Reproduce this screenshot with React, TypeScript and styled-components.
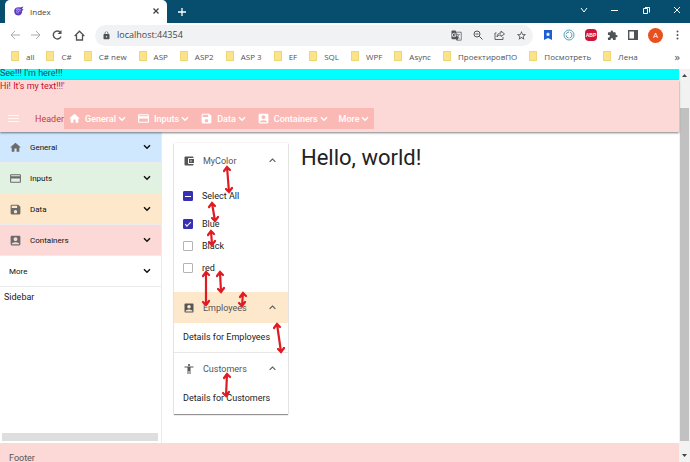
import React, { useEffect, useRef, useState } from "react";
import styled, { createGlobalStyle } from "styled-components";
import {
  MdAccessibility,
  MdAccountBalanceWallet,
  MdAccountBox,
  MdCreditCard,
  MdExtension,
  MdExpandLess,
  MdHome,
  MdLock,
  MdSave,
  MdStarBorder,
  MdGTranslate,
} from "react-icons/md";

const GlobalStyle = createGlobalStyle`
  *, *::before, *::after { box-sizing: border-box; }
  body { margin: 0; background: #fff; font-family: Roboto, "Liberation Sans", sans-serif; font-size: 9px; color: #222; }
  button { font: inherit; color: inherit; border: 0; background: none; padding: 0; }
  a { color: inherit; text-decoration: none; }
  svg { display: block; flex: none; }
`;

const Window = styled.div`
  display: flex;
  flex-direction: column;
  height: 100vh;
  overflow: hidden;
`;

/* Browser frame */

const TabStrip = styled.div`
  display: flex;
  align-items: center;
  height: 23px;
  padding: 0 7px 0 5px;
  background: #064d6e;
  color: #fff;
  font-family: "Open Sans", sans-serif;
`;

const Tab = styled.div`
  display: flex;
  align-items: center;
  gap: 6px;
  width: 162px;
  height: 23px;
  padding: 0 6px 1px 9px;
  border-radius: 5px 5px 0 0;
  background: #fff;
  color: #444;
  font-size: 8px;
`;

const TabTitle = styled.span`
  flex: 1;
`;

const TabButton = styled.button`
  display: flex;
  margin-left: 10px;
`;

const WindowControls = styled.div`
  display: flex;
  align-items: center;
  gap: 23px;
  margin-left: auto;
  padding-bottom: 3px;
  padding-right: 2px;
`;

const Toolbar = styled.div`
  display: flex;
  align-items: center;
  height: 24px;
  padding: 0 10px;
  background: #fff;
  color: #505356;
`;

const NavButtons = styled.div`
  display: flex;
  align-items: center;
  gap: 11px;
  width: 85px;
`;

const AddressBar = styled.div`
  display: flex;
  flex: 1;
  align-items: center;
  gap: 5px;
  height: 21px;
  padding: 0 6px 0 7px;
  border-radius: 11px;
  background: #f1f2f4;
`;

const AddressInput = styled.input`
  flex: 1;
  min-width: 0;
  padding: 0 0 1px 1px;
  border: 0;
  outline: 0;
  background: transparent;
  color: #45484b;
  font: 9px "Open Sans", sans-serif;
`;

const AddressActions = styled.div`
  display: flex;
  align-items: center;
  gap: 11px;
`;

const Extensions = styled.div`
  display: flex;
  align-items: center;
  gap: 10px;
  margin-left: 10px;
  margin-right: -2px;
`;

const BlockerBadge = styled.button`
  && {
    width: 12px;
    height: 12px;
    border-radius: 4px;
    background: #d1143f;
    color: #fff;
    font: bold 5px "Liberation Sans", sans-serif;
  }
`;

const Avatar = styled.button`
  && {
    width: 15px;
    height: 15px;
    border-radius: 50%;
    background: #e8501f;
    color: #fff;
    font-size: 8px;
  }
`;

const Bookmarks = styled.nav`
  display: flex;
  align-items: center;
  height: 22px;
  padding: 0 10px 4px 11px;
  background: #fff;
  color: #505356;
  font: 8px "Open Sans", sans-serif;
  white-space: nowrap;
`;

const Bookmark = styled.a`
  display: flex;
  align-items: center;
  gap: 7px;
  margin-right: 12px;
  &::before {
    content: "";
    width: 8px;
    height: 10px;
    border: 1px solid #efd676;
    background: #fbe389;
  }
`;

const MoreBookmarks = styled.button`
  && {
    margin-left: auto;
    font-size: 11px;
  }
`;

/* Page */

const Viewport = styled.div`
  display: flex;
  flex: 1;
  min-height: 0;
`;

const Page = styled.div`
  display: flex;
  flex: 1;
  flex-direction: column;
  min-width: 0;
  min-height: 0;
`;

const Notice = styled.div`
  height: 11px;
  background: #00ffff;
  color: #1c4a55;
  line-height: 9px;
`;

const Header = styled.header`
  position: relative;
  background: #fcd9d6;
  box-shadow: 0 1px 2px rgba(0, 0, 0, 0.5);
`;

const Warning = styled.div`
  height: 28px;
  color: #c8102e;
  line-height: 12px;
`;

const HeaderBar = styled.div`
  display: flex;
  align-items: center;
  height: 24px;
  padding: 0 0 3px 8px;
`;

const MenuToggle = styled.button`
  width: 27px;
  color: #fff;
`;

const HeaderTitle = styled.span`
  width: 29px;
  color: #c73a3a;
`;

const Menu = styled.nav`
  display: flex;
  align-items: center;
  gap: 11px;
  height: 21px;
  padding: 0 5px 0 4px;
  background: #fbb9b6;
  color: #fff;
  font-weight: 500;
`;

const MenuItem = styled.button`
  display: flex;
  align-items: center;
  gap: 2px;
`;

const MenuText = styled.span<{ $icon: boolean }>`
  padding-left: ${(p) => (p.$icon ? "2px" : "0")};
`;

const Body = styled.div`
  display: flex;
  flex: 1;
  min-height: 0;
`;

const Sidebar = styled.aside`
  display: flex;
  flex-direction: column;
  width: 162px;
  border-right: 1px solid #ebebeb;
`;

const SideItem = styled.button<{ $tint: string }>`
  && {
    display: flex;
    align-items: center;
    height: 31px;
    padding: 0 10px 0 9px;
    border-bottom: 1px solid #ececec;
    background: ${(p) => p.$tint};
    color: #111;
    font-size: 8px;
    font-weight: 400;
    text-align: left;
  }
`;

const SideIcon = styled.span`
  width: 21px;
  color: #6b6b6b;
`;

const SideText = styled.span`
  flex: 1;
`;

const SideLabel = styled.div`
  padding: 5px 4px;
`;

const SideScroll = styled.div`
  height: 8px;
  margin: auto 3px 2px 2px;
  background: #dedede;
`;

const Content = styled.main`
  display: flex;
  flex: 1;
  align-items: flex-start;
  gap: 13px;
  padding: 11px 12px;
`;

const Card = styled.section`
  position: relative;
  width: 114px;
  padding-top: 2px;
  background: #fff;
  box-shadow: 0 1px 1px rgba(0, 0, 0, 0.4), 0 0 2px rgba(0, 0, 0, 0.12);
`;

const PanelHead = styled.button<{ $tint?: string }>`
  && {
    display: flex;
    align-items: center;
    width: 100%;
    height: 31px;
    padding: 0 9px;
    background: ${(p) => p.$tint ?? "#fff"};
    color: #555;
    text-align: left;
  }
`;

const PanelTitle = styled.span`
  flex: 1;
  padding-left: 8px;
`;

const PanelText = styled.div<{ $divider?: boolean }>`
  height: 30px;
  padding: 0 9px;
  border-bottom: ${(p) => (p.$divider ? "1px solid #e8e8e8" : "0")};
  line-height: 29px;
`;

const Choices = styled.div`
  padding: 9px 9px 13px;
`;

const Choice = styled.label<{ $lead?: boolean }>`
  display: flex;
  align-items: center;
  gap: 9px;
  height: 22px;
  margin-bottom: ${(p) => (p.$lead ? "6px" : "0")};
`;

const Tick = styled.input`
  appearance: none;
  display: grid;
  place-items: center;
  width: 10px;
  height: 10px;
  margin: 0;
  border: 1px solid #b4b4b4;
  border-radius: 1px;
  background: #fff;
  &:checked,
  &:indeterminate {
    border-color: #3730b4;
    background: #3730b4;
  }
  &:indeterminate::before {
    content: "";
    width: 6px;
    height: 1px;
    background: #fff;
  }
  &:checked::before {
    content: "";
    width: 6px;
    height: 3px;
    margin-bottom: 2px;
    border: solid #fff;
    border-width: 0 0 1px 1px;
    transform: rotate(-45deg);
  }
`;

const Marks = styled.svg`
  position: absolute;
  top: 0;
  left: 0;
  pointer-events: none;
`;

const Title = styled.h1`
  margin: 1px 0 0;
  font-size: 22px;
  font-weight: 400;
  line-height: 28px;
`;

const Footer = styled.footer`
  height: 19px;
  padding: 10px 9px 0;
  overflow: hidden;
  background: #fcd9d6;
  color: #555;
  line-height: 11px;
`;

const ScrollTrack = styled.div`
  display: flex;
  flex-direction: column;
  align-items: center;
  width: 11px;
  padding: 5px 1px;
  background: #f2f2f2;
`;

const ScrollThumb = styled.div`
  flex: 1;
  width: 9px;
  margin: 31px 0 13px;
  background: #c1c1c1;
`;

const bookmarks = ["all", "C#", "C# new", "ASP", "ASP2", "ASP 3", "EF", "SQL", "WPF", "Async", "ПроектировПО", "Посмотреть", "Лена"];

const sections = [
  { name: "General", tint: "#d0e8fd", Icon: MdHome },
  { name: "Inputs", tint: "#e1f2e3", Icon: MdCreditCard },
  { name: "Data", tint: "#fee8cb", Icon: MdSave },
  { name: "Containers", tint: "#fcd9d6", Icon: MdAccountBox },
  { name: "More", tint: "#fff", Icon: null },
];

/* Each arrow runs between two points of the card, with a head at both ends. */
const arrows = [
  [53, 24, 55, 49],
  [38, 60, 41, 78],
  [37, 88, 38, 102],
  [32, 129, 32, 162],
  [46, 129, 47, 149],
  [69, 150, 68, 163],
  [103, 181, 107, 209],
  [53, 231, 52, 253],
];

const arrowPath = ([x1, y1, x2, y2]: number[]) =>
  `M${x1} ${y1}L${x2} ${y2}M${x1 - 3} ${y1 + 4}L${x1} ${y1}L${x1 + 3} ${y1 + 3}M${x2 - 3} ${y2 - 3}L${x2} ${y2}L${x2 + 3} ${y2 - 4}`;

function Chevron() {
  return (
    <svg width="8" height="6" fill="none" stroke="currentColor" strokeWidth="1.4">
      <path d="M1 1.200L4 4.300 7 1.200" />
    </svg>
  );
}

function BrowserFrame() {
  const line = { fill: "none", stroke: "currentColor" };
  return (
    <>
      <TabStrip>
        <Tab>
          <svg width="10" height="10" viewBox="0 0 20 20">
            <path d="M1 7c2-4 7-5 11-4l7-2-3 5 3 1-3 3c1 5-3 9-8 9-6 0-9-6-7-12z" fill="#5b3bc4" />
            <path d="M5 13c0-5 5-8 9-5M8 15c-1-4 2-6 5-5M4 7l5-2" fill="none" stroke="#d5c8fa" strokeWidth="1.5" />
          </svg>
          <TabTitle>Index</TabTitle>
          <button aria-label="Close tab">
            <svg width="10" height="10" {...line} strokeWidth="1.3"><path d="M2.500 2.500l5 5m0-5l-5 5" /></svg>
          </button>
        </Tab>
        <TabButton aria-label="New tab">
          <svg width="10" height="10" {...line} strokeWidth="1.3"><path d="M5 1v8M1 5h8" /></svg>
        </TabButton>
        <WindowControls>
          <button aria-label="Search tabs"><svg width="8" height="8" {...line}><path d="M1 2l3 4 3-4" /></svg></button>
          <button aria-label="Minimize"><svg width="8" height="8" {...line}><path d="M0 4.500h7" /></svg></button>
          <button aria-label="Restore"><svg width="8" height="8" {...line}><path d="M1.500 2.500h4v5h-4zM3 1.500h4.500v5" /></svg></button>
          <button aria-label="Close"><svg width="8" height="8" {...line}><path d="M1 1l6 6m0-6L1 7" /></svg></button>
        </WindowControls>
      </TabStrip>
      <Toolbar>
        <NavButtons>
          <button aria-label="Back"><svg width="10" height="10" fill="none" stroke="#a9abad"><path d="M10 5H1m4-4L1 5l4 4" /></svg></button>
          <button aria-label="Forward"><svg width="10" height="10" fill="none" stroke="#a9abad"><path d="M0 5h9M5 1l4 4-4 4" /></svg></button>
          <button aria-label="Reload">
            <svg width="11" height="10" {...line} strokeWidth="1.4"><path d="M9 6.500A4 4 0 1 1 8.500 2.500" /><path d="M9.500 0v4h-4z" fill="currentColor" stroke="none" /></svg>
          </button>
          <button aria-label="Home"><svg width="11" height="11" {...line} strokeWidth="1.3"><path d="M.7 6L5.500 1.200 10.300 6M2.500 5v5h6V5" /></svg></button>
        </NavButtons>
        <AddressBar>
          <MdLock size={9} />
          <AddressInput aria-label="Address" defaultValue="localhost:44354" />
          <AddressActions>
            <button aria-label="Translate"><MdGTranslate size={11} /></button>
            <button aria-label="Zoom out"><svg width="10" height="10" {...line}><circle cx="4" cy="4" r="3" /><path d="M2.500 4h3M6.300 6.300L9.500 9.500" /></svg></button>
            <button aria-label="Share"><svg width="11" height="10" {...line}><path d="M2.500 3H1v6.500h8V7M3 7c0-3 2-4 4-4V1l3.500 3L7 6.500V5C5 5 4 5.500 3 7z" strokeWidth=".9" /></svg></button>
            <button aria-label="Bookmark"><MdStarBorder size={11} /></button>
          </AddressActions>
        </AddressBar>
        <Extensions>
          <button aria-label="Saved pages"><svg width="10" height="12"><path d="M1 1h8v10L5 9l-4 2z" fill="#1d5fd0" /><path d="M5 3l.7 1.500 1.500.2-1.100 1 .3 1.600L5 6.500l-1.400.8.3-1.600-1.100-1 1.500-.2z" fill="#fff" /></svg></button>
          <button aria-label="Sync"><svg width="12" height="12" fill="none"><circle cx="6" cy="6" r="5" stroke="#4fa6bd" /><circle cx="6" cy="6" r="3" stroke="#6f8fa5" strokeDasharray="4 1" /></svg></button>
          <BlockerBadge>ABP</BlockerBadge>
          <button aria-label="Extensions"><MdExtension size={11} /></button>
          <button aria-label="Side panel"><svg width="10" height="10"><path d="M.7.7h8.600v8.600H.7z" fill="none" stroke="currentColor" strokeWidth="1.400" /><path d="M6 1h3v8H6z" fill="currentColor" /></svg></button>
          <Avatar>A</Avatar>
          <button aria-label="Browser menu"><svg width="9" height="10" fill="currentColor"><circle cx="4.500" cy="1.500" r="1" /><circle cx="4.500" cy="5" r="1" /><circle cx="4.500" cy="8.500" r="1" /></svg></button>
        </Extensions>
      </Toolbar>
      <Bookmarks>
        {bookmarks.map((name) => <Bookmark href="#" key={name}>{name}</Bookmark>)}
        <MoreBookmarks aria-label="More bookmarks">»</MoreBookmarks>
      </Bookmarks>
    </>
  );
}

export default function App() {
  const all = useRef<HTMLInputElement>(null);
  const [colors, setColors] = useState<Record<string, boolean>>({ Blue: true, Black: false, red: false });
  const count = Object.values(colors).filter(Boolean).length;
  const full = count === 3;

  useEffect(() => {
    if (all.current) all.current.indeterminate = count > 0 && !full;
  }, [count, full]);

  return (
    <Window>
      <GlobalStyle />
      <BrowserFrame />
      <Viewport>
        <Page>
          <Notice>See!!! I'm here!!!</Notice>
          <Header>
            <Warning>Hi! It's my text!!!'</Warning>
            <HeaderBar>
              <MenuToggle aria-label="Toggle sidebar">
                <svg width="12" height="9" stroke="currentColor" strokeOpacity=".8"><path d="M0 1.500h11M0 4.500h11M0 7.500h11" /></svg>
              </MenuToggle>
              <HeaderTitle>Header</HeaderTitle>
              <Menu>
                {sections.map(({ name, Icon }) => (
                  <MenuItem key={name}>
                    {Icon && <Icon size={13} />}
                    <MenuText $icon={!!Icon}>{name}</MenuText>
                    <Chevron />
                  </MenuItem>
                ))}
              </Menu>
            </HeaderBar>
          </Header>
          <Body>
            <Sidebar>
              {sections.map(({ name, tint, Icon }) => (
                <SideItem key={name} $tint={tint}>
                  {Icon && <SideIcon><Icon size={13} /></SideIcon>}
                  <SideText>{name}</SideText>
                  <Chevron />
                </SideItem>
              ))}
              <SideLabel>Sidebar</SideLabel>
              <SideScroll />
            </Sidebar>
            <Content>
              <Card>
                <PanelHead>
                  <MdAccountBalanceWallet size={12} />
                  <PanelTitle>MyColor</PanelTitle>
                  <MdExpandLess size={13} />
                </PanelHead>
                <Choices>
                  <Choice $lead>
                    <Tick
                      ref={all}
                      type="checkbox"
                      checked={full}
                      onChange={() => setColors({ Blue: !full, Black: !full, red: !full })}
                    />
                    Select All
                  </Choice>
                  {Object.keys(colors).map((name) => (
                    <Choice key={name}>
                      <Tick
                        type="checkbox"
                        checked={colors[name]}
                        onChange={() => setColors({ ...colors, [name]: !colors[name] })}
                      />
                      {name}
                    </Choice>
                  ))}
                </Choices>
                <PanelHead $tint="#fee8cb">
                  <MdAccountBox size={12} />
                  <PanelTitle>Employees</PanelTitle>
                  <MdExpandLess size={13} />
                </PanelHead>
                <PanelText $divider>Details for Employees</PanelText>
                <PanelHead>
                  <MdAccessibility size={12} />
                  <PanelTitle>Customers</PanelTitle>
                  <MdExpandLess size={13} />
                </PanelHead>
                <PanelText>Details for Customers</PanelText>
                <Marks width="114" height="271" fill="none" stroke="#e01b22" strokeWidth="2.200" strokeLinecap="round">
                  {arrows.map((a) => <path key={a.join()} d={arrowPath(a)} />)}
                </Marks>
              </Card>
              <Title>Hello, world!</Title>
            </Content>
          </Body>
          <Footer>Footer</Footer>
        </Page>
        <ScrollTrack>
          <svg width="5" height="3"><path d="M0 3l2.500-3L5 3z" fill="#444" /></svg>
          <ScrollThumb />
          <svg width="5" height="3"><path d="M0 0l2.500 3L5 0z" fill="#444" /></svg>
        </ScrollTrack>
      </Viewport>
    </Window>
  );
}
